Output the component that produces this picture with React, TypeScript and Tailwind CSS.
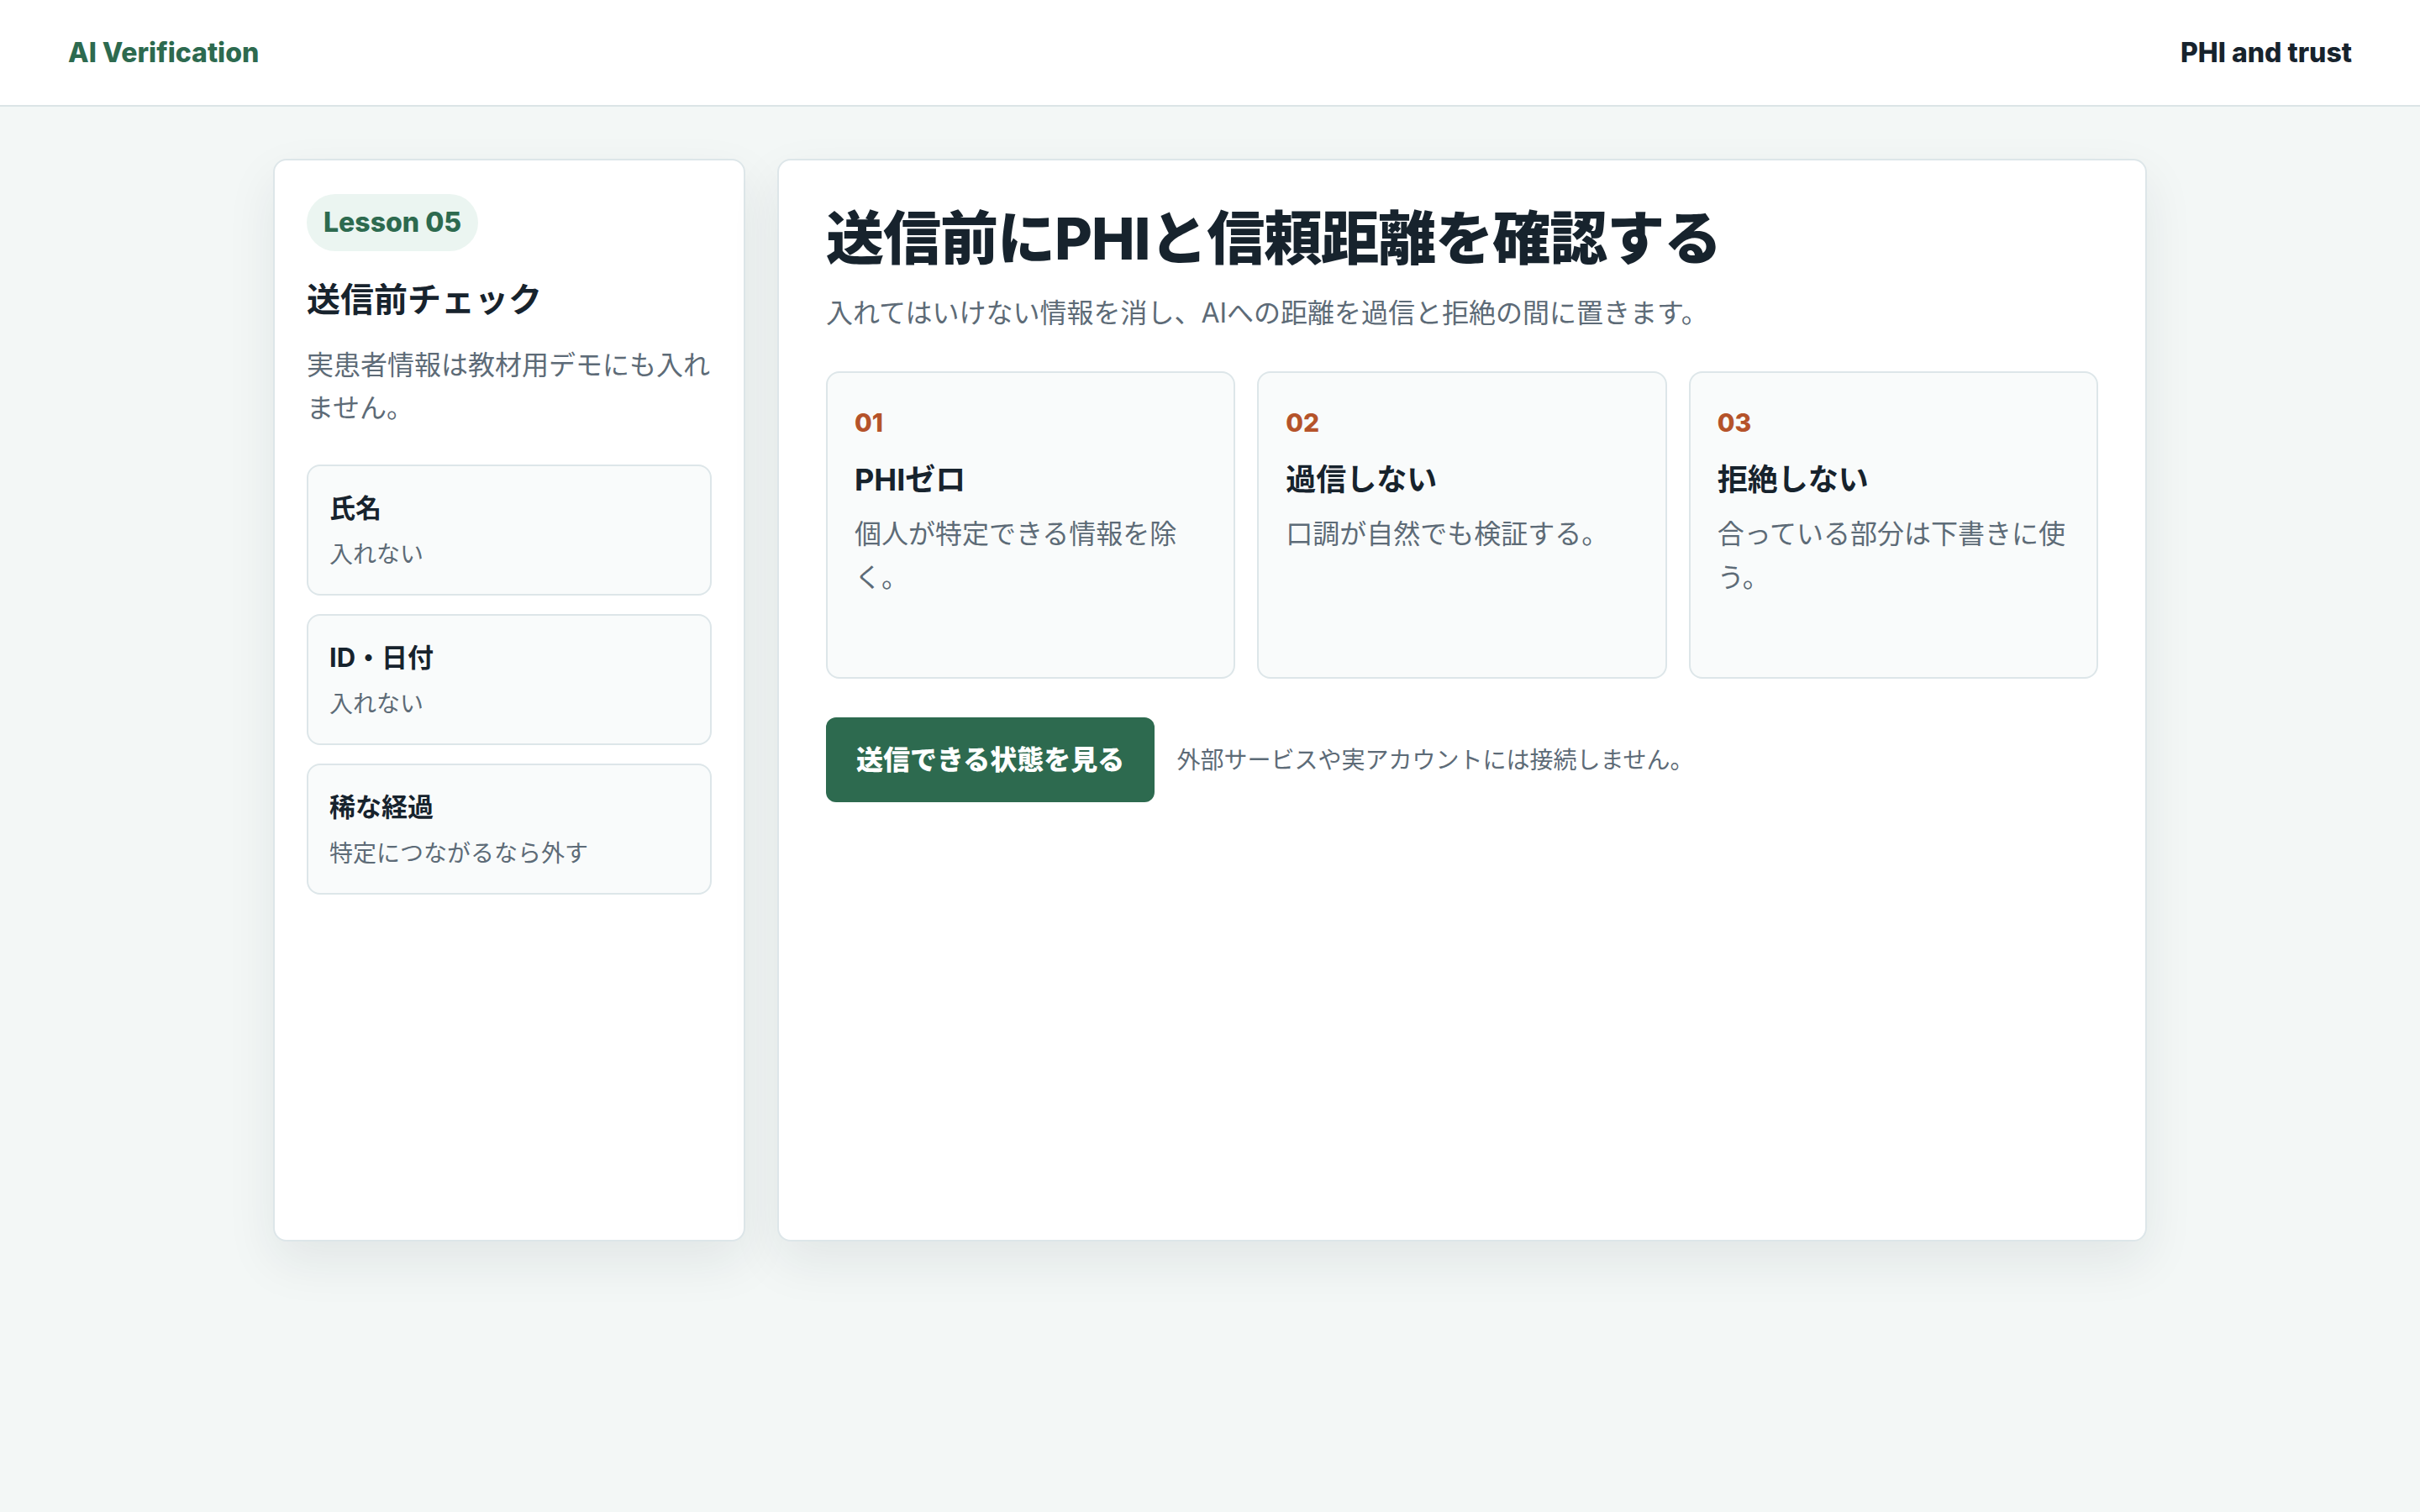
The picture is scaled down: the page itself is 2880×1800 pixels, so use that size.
import React from 'react';

const items = [
  { title: '氏名', note: '入れない' },
  { title: 'ID・日付', note: '入れない' },
  { title: '稀な経過', note: '特定につながるなら外す' },
];

const steps = [
  { no: '01', title: 'PHIゼロ', body: '個人が特定できる情報を除く。' },
  { no: '02', title: '過信しない', body: '口調が自然でも検証する。' },
  { no: '03', title: '拒絶しない', body: '合っている部分は下書きに使う。' },
];

const font = "font-['Inter','Noto_Sans_CJK_JP',sans-serif]";

export default function App() {
  return (
    <div className={`min-h-screen bg-[#f3f7f6] text-[#17232d] ${font}`}>
      <header className="h-[127px] bg-white border-b-2 border-[#dbe4e6] px-[81px] flex items-center justify-between">
        <span className="text-[32px] font-extrabold text-[#2d6a4f]">AI Verification</span>
        <span className="text-[32px] font-extrabold text-[#17232d]">PHI and trust</span>
      </header>

      <main className="w-[2230px] mx-auto pt-[62px] grid grid-cols-[562px_1fr] gap-[38px]">
        <aside className="h-[1289px] bg-white border-2 border-[#dde6e9] rounded-[16px] shadow-[0_24px_60px_rgba(23,35,45,0.08)] pt-[40px] px-[38px]">
          <span className="inline-flex items-center h-[68px] px-[20px] rounded-full bg-[#ebf5f1] text-[32px] font-extrabold text-[#2d6a4f]">
            Lesson 05
          </span>
          <h2 className="mt-[30px] text-[40px] font-bold leading-[1.4]">送信前チェック</h2>
          <p className="mt-[24px] text-[32px] leading-[1.6] text-[#5d6b77]">実患者情報は教材用デモにも入れません。</p>
          <div className="mt-[42px] flex flex-col gap-[22px]">
            {items.map((it) => (
              <div key={it.title} className="h-[156px] bg-[#f9fbfb] border-2 border-[#dde6e9] rounded-[16px] px-[25px] pt-[28px]">
                <div className="text-[31px] font-bold leading-[1.4]">{it.title}</div>
                <div className="mt-[12px] text-[28px] leading-[1.5] text-[#5d6b77]">{it.note}</div>
              </div>
            ))}
          </div>
        </aside>

        <section className="h-[1289px] bg-white border-2 border-[#dde6e9] rounded-[16px] shadow-[0_24px_60px_rgba(23,35,45,0.08)] px-[56px] pt-[56px]">
          <h1 className="text-[69px] font-extrabold leading-[1.1] tracking-[-1px]">送信前にPHIと信頼距離を確認する</h1>
          <p className="mt-[24px] text-[32px] leading-[1.6] text-[#5d6b77]">
            入れてはいけない情報を消し、AIへの距離を過信と拒絶の間に置きます。
          </p>

          <div className="mt-[44px] grid grid-cols-3 gap-[26px]">
            {steps.map((s) => (
              <div key={s.no} className="h-[366px] bg-[#f9fbfb] border-2 border-[#dde6e9] rounded-[16px] px-[32px] pt-[38px]">
                <div className="text-[30px] font-extrabold leading-[1.4] text-[#b5532a]">{s.no}</div>
                <div className="mt-[22px] text-[36px] font-bold leading-[1.4]">{s.title}</div>
                <p className="mt-[14px] text-[32px] leading-[1.6] text-[#5d6b77]">{s.body}</p>
              </div>
            ))}
          </div>

          <div className="mt-[46px] flex items-center gap-[26px]">
            <button className="h-[101px] px-[36px] rounded-[12px] bg-[#2d6a4f] text-white text-[32px] font-extrabold">
              送信できる状態を見る
            </button>
            <span className="text-[28px] text-[#5d6b77]">外部サービスや実アカウントには接続しません。</span>
          </div>
        </section>
      </main>
    </div>
  );
}
